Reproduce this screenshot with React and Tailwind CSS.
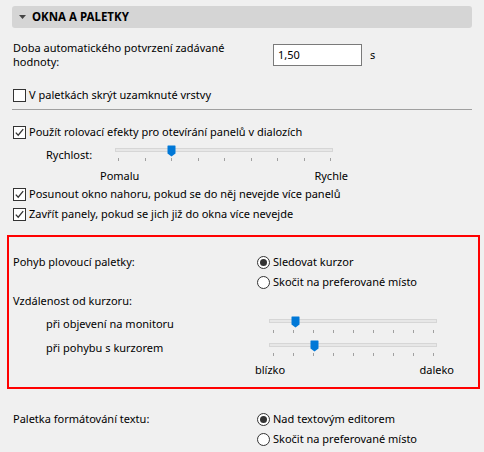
import React from "react";

function Check({ checked }) {
  return (
    <svg width="13" height="13" viewBox="0 0 13 13" className="shrink-0">
      <rect x="0.5" y="0.5" width="12" height="12" fill="#ffffff" stroke="#333333" />
      {checked && (
        <path d="M2.8 6.6 L5.2 9.2 L10.2 3.2" fill="none" stroke="#333333" strokeWidth="1.3" />
      )}
    </svg>
  );
}

function Radio({ checked }) {
  return (
    <svg width="13" height="13" viewBox="0 0 13 13" className="shrink-0">
      <circle cx="6.5" cy="6.5" r="6" fill="#ffffff" stroke="#333333" />
      {checked && <circle cx="6.5" cy="6.5" r="3.5" fill="#333333" />}
    </svg>
  );
}

function CheckRow({ checked, children }) {
  return (
    <div className="flex h-[20px] items-center pl-[13px]">
      <Check checked={checked} />
      <span className="ml-[3px]">{children}</span>
    </div>
  );
}

function RadioRow({ checked, children }) {
  return (
    <div className="flex h-[20px] items-center">
      <Radio checked={checked} />
      <span className="ml-[3px]">{children}</span>
    </div>
  );
}

function Slider({ width, ticks, thumb, trackTop, tickTop, height }) {
  return (
    <div className="relative shrink-0" style={{ width, height }}>
      <div
        className="absolute left-0 right-0 h-[4px] bg-[#e7e7e7] border border-[#d6d6d6]"
        style={{ top: trackTop }}
      />
      {ticks.map((t, i) => (
        <div
          key={i}
          className="absolute w-px h-[3px] bg-[#a0a0a0]"
          style={{ left: t, top: tickTop }}
        />
      ))}
      <svg
        width="9"
        height="12"
        viewBox="0 0 9 12"
        className="absolute"
        style={{ left: thumb - 4, top: trackTop - 3 }}
      >
        <path d="M1 0.5 H8 Q8.5 0.5 8.5 1 V8.5 L4.5 11.5 L0.5 8.5 V1 Q0.5 0.5 1 0.5 Z" fill="#0078d7" />
      </svg>
    </div>
  );
}

export default function App() {
  const t1 = Array.from({ length: 9 }, (_, i) => Math.round(3 + i * 26.5));
  const t2 = Array.from({ length: 9 }, (_, i) => 4 + i * 20);
  return (
    <div
      className="w-[484px] h-[452px] overflow-hidden bg-[#f0f0f0] text-[11px] text-[#000000] flex flex-col"
      style={{ fontFamily: '"Noto Sans", "Open Sans", sans-serif' }}
    >
      {/* header */}
      <div className="mt-[6px] mx-[12px] h-[22px] rounded-[3px] bg-[#d5d5d5] flex items-center pl-[7px]">
        <svg width="7" height="4" viewBox="0 0 7 4">
          <path d="M0 0 H7 L3.5 4 Z" fill="#444444" />
        </svg>
        <span className="ml-[6px] font-bold text-[11.5px]">OKNA A PALETKY</span>
      </div>

      {/* auto confirm */}
      <div className="mt-[13px] flex pl-[13px]">
        <div className="w-[260px] leading-[14px]">
          Doba automatického potvrzení zadávané
          <br />
          hodnoty:
        </div>
        <div className="mt-[3px] w-[89px] h-[22px] bg-white border border-[#7a7a7a] pl-[4px] leading-[20px]">
          1,50
        </div>
        <div className="mt-[3px] ml-[8px] leading-[22px]">s</div>
      </div>

      <div className="mt-[16px]">
        <CheckRow checked={false}>V paletkách skrýt uzamknuté vrstvy</CheckRow>
      </div>

      <div className="mt-[4px] mx-[12px] h-px bg-[#a0a0a0]" />

      <div className="mt-[12px]">
        <CheckRow checked={true}>Použít rolovací efekty pro otevírání panelů v dialozích</CheckRow>
      </div>

      <div className="flex h-[24px] mt-[1px]">
        <div className="pl-[46px] w-[115px] leading-[24px]">Rychlost:</div>
        <Slider width={218} height={24} ticks={t1} thumb={56} trackTop={5} tickTop={15} />
      </div>

      <div className="flex justify-between w-[348px] pl-[100px] h-[17px] leading-[17px]">
        <span>Pomalu</span>
        <span>Rychle</span>
      </div>

      <CheckRow checked={true}>Posunout okno nahoru, pokud se do něj nevejde více panelů</CheckRow>
      <CheckRow checked={true}>Zavřít panely, pokud se jich již do okna více nevejde</CheckRow>

      {/* highlighted box */}
      <div className="mt-[11px] ml-[7px] w-[473px] h-[154px] border-2 border-[#ff0000] flex flex-col pl-[4px] pt-[15px]">
        <div className="flex">
          <div className="w-[244px] leading-[20px]">Pohyb plovoucí paletky:</div>
          <div className="flex flex-col">
            <RadioRow checked={true}>Sledovat kurzor</RadioRow>
            <RadioRow checked={false}>Skočit na preferované místo</RadioRow>
          </div>
        </div>
        <div className="h-[18px] leading-[18px]">Vzdálenost od kurzoru:</div>
        <div className="mt-[2px] flex h-[24px]">
          <div className="pl-[33px] w-[256px] leading-[24px]">při objevení na monitoru</div>
          <Slider width={168} height={24} ticks={t2} thumb={26} trackTop={7} tickTop={18} />
        </div>
        <div className="flex h-[24px]">
          <div className="pl-[33px] w-[256px] leading-[24px]">při pohybu s kurzorem</div>
          <Slider width={168} height={24} ticks={t2} thumb={45} trackTop={7} tickTop={17} />
        </div>
        <div className="flex justify-between w-[441px] pl-[242px] h-[20px] leading-[20px]">
          <span>blízko</span>
          <span>daleko</span>
        </div>
      </div>

      <div className="mt-[20px] flex pl-[13px]">
        <div className="w-[244px] leading-[20px]">Paletka formátování textu:</div>
        <div className="flex flex-col">
          <RadioRow checked={true}>Nad textovým editorem</RadioRow>
          <RadioRow checked={false}>Skočit na preferované místo</RadioRow>
        </div>
      </div>
    </div>
  );
}
